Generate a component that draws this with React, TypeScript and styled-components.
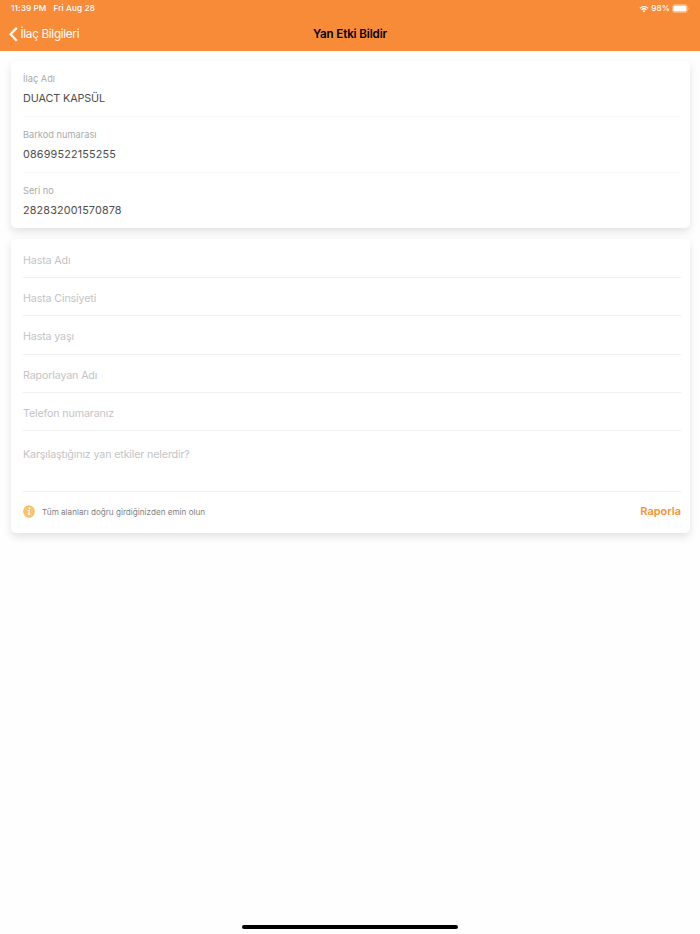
import React from "react";
import styled, { createGlobalStyle } from "styled-components";

const GlobalStyle = createGlobalStyle`
  * { box-sizing: border-box; }
  body {
    margin: 0;
    background: #fff;
    font-family: Inter, "Liberation Sans", sans-serif;
  }
`;

const Screen = styled.div`
  height: 934px;
  display: flex;
  flex-direction: column;
  overflow: hidden;
  background: #fefefe;
`;

const Header = styled.header`
  flex: none;
  height: 51px;
  background: #f88b37;
  color: #fff;
`;

const StatusBar = styled.div`
  height: 17px;
  padding: 0 11px;
  display: flex;
  justify-content: space-between;
  align-items: center;
  font-size: 8.2px;
  font-weight: 500;
  line-height: 17px;
  letter-spacing: 0.12px;
`;

const StatusGroup = styled.div<{ $gap: number }>`
  display: flex;
  align-items: center;
  gap: ${(p) => p.$gap}px;

  &:last-child {
    margin-right: -1px;
  }
`;

const NavBar = styled.nav`
  height: 34px;
  padding: 0 9px;
  display: grid;
  grid-template-columns: 1fr auto 1fr;
  align-items: center;
`;

const BackLink = styled.a`
  display: flex;
  align-items: center;
  gap: 2.5px;
  font-size: 11.7px;
  line-height: 18px;
  letter-spacing: -0.3px;
`;

const Title = styled.h1`
  margin: 0;
  color: #000;
  font-size: 11.6px;
  font-weight: 600;
  line-height: 18px;
  letter-spacing: -0.14px;
`;

const Content = styled.main`
  flex: 1;
  display: flex;
  flex-direction: column;
  gap: 11px;
  padding: 10px 10.5px 0;
`;

const Card = styled.section`
  padding: 0 8.5px 0 12.5px;
  border-radius: 5px;
  background: #fff;
  box-shadow: 0 4px 8px rgba(0, 0, 0, 0.11);
`;

const Detail = styled.div`
  height: 55.8px;
  padding-top: 9px;
  border-bottom: 1px solid #f8f8f8;

  &:last-child {
    border-bottom: 0;
  }
`;

const DetailLabel = styled.div`
  color: #aaa;
  font-size: 9.2px;
  line-height: 17px;
  letter-spacing: 0.03px;
`;

const DetailValue = styled.div<{ $spacing: number }>`
  margin-top: 3.3px;
  color: #4d4d4d;
  font-size: 10.8px;
  line-height: 17px;
  letter-spacing: ${(p) => p.$spacing}px;
`;

const Field = styled.div<{ $tall?: boolean }>`
  height: ${(p) => (p.$tall ? 60.8 : 38.25)}px;
  padding-top: ${(p) => (p.$tall ? 15 : 12)}px;
  border-bottom: 1px solid #efefef;
  color: #c4c4c6;
  font-size: 10.7px;
  line-height: 18px;
  letter-spacing: -0.14px;

  &:first-child {
    height: 38.8px;
    padding-top: 12.6px;
  }
`;

const CardFooter = styled.footer`
  height: 40.8px;
  padding-bottom: 0.8px;
  display: flex;
  align-items: center;
`;

const Hint = styled.span`
  flex: 1;
  margin-left: 7px;
  color: #808080;
  font-size: 8.1px;
  line-height: 14px;
  letter-spacing: 0.02px;
`;

const ReportButton = styled.button`
  padding: 0;
  border: 0;
  background: none;
  color: #fa922f;
  font: 600 11px/18px Inter, sans-serif;
  transform: translateY(-1px);
`;

const HomeIndicator = styled.div`
  align-self: center;
  flex: none;
  width: 216px;
  height: 4px;
  margin-bottom: 5.5px;
  border-radius: 2px;
  background: #000;
`;

const WifiIcon = () => (
  <svg width="10" height="8" viewBox="0 0 10 8" fill="none" stroke="#fff" strokeWidth="1.3">
    <path d="M.9 3.2a5.9 5.9 0 0 1 8.2 0M2.5 4.9a3.6 3.6 0 0 1 5 0" />
    <path d="M3.6 6a2 2 0 0 1 2.8 0L5 7.5Z" fill="#fff" stroke="none" />
  </svg>
);

const BatteryIcon = () => (
  <svg width="18" height="9" viewBox="0 0 18 9">
    <rect x=".5" y=".5" width="15" height="8" rx="2.2" fill="none" stroke="#fff" strokeOpacity=".4" strokeWidth=".8" />
    <rect x="1.3" y="1.5" width="13.2" height="6" rx="1.2" fill="#fff" />
    <path d="M16.5 3.2c1 .5 1 2.1 0 2.6Z" fill="#fff" fillOpacity=".5" />
  </svg>
);

const BackIcon = () => (
  <svg width="9" height="15" viewBox="0 0 9 15" fill="none" stroke="#fff" strokeWidth="2.3">
    <path d="M7.8 .9 1.6 7.3 7.8 13.7" />
  </svg>
);

const InfoIcon = () => (
  <svg width="12" height="13" viewBox="0 0 12 13">
    <ellipse cx="6" cy="6.5" rx="5.8" ry="6.3" fill="#fdc167" />
    <circle cx="6.5" cy="3.4" r="1" fill="#fff" />
    <path d="M4.5 5.7h1.9L5.7 9.4h1.6" fill="none" stroke="#fff" strokeWidth="1.2" />
  </svg>
);

const details = [
  { label: "İlaç Adı", value: "DUACT KAPSÜL", spacing: -0.1 },
  { label: "Barkod numarası", value: "08699522155255", spacing: 0.17 },
  { label: "Seri no", value: "282832001570878", spacing: 0.15 },
];

const fields = ["Hasta Adı", "Hasta Cinsiyeti", "Hasta yaşı", "Raporlayan Adı", "Telefon numaranız"];

export default function App() {
  return (
    <>
      <GlobalStyle />
      <Screen>
        <Header>
          <StatusBar>
            <StatusGroup $gap={7}>
              <span>11:39 PM</span>
              <span>Fri Aug 28</span>
            </StatusGroup>
            <StatusGroup $gap={2}>
              <WifiIcon />
              <span>98%</span>
              <BatteryIcon />
            </StatusGroup>
          </StatusBar>
          <NavBar>
            <BackLink>
              <BackIcon />
              İlaç Bilgileri
            </BackLink>
            <Title>Yan Etki Bildir</Title>
          </NavBar>
        </Header>
        <Content>
          <Card>
            {details.map((d) => (
              <Detail key={d.label}>
                <DetailLabel>{d.label}</DetailLabel>
                <DetailValue $spacing={d.spacing}>{d.value}</DetailValue>
              </Detail>
            ))}
          </Card>
          <Card>
            {fields.map((f) => (
              <Field key={f}>{f}</Field>
            ))}
            <Field $tall>Karşılaştığınız yan etkiler nelerdir?</Field>
            <CardFooter>
              <InfoIcon />
              <Hint>Tüm alanları doğru girdiğinizden emin olun</Hint>
              <ReportButton>Raporla</ReportButton>
            </CardFooter>
          </Card>
        </Content>
        <HomeIndicator />
      </Screen>
    </>
  );
}
